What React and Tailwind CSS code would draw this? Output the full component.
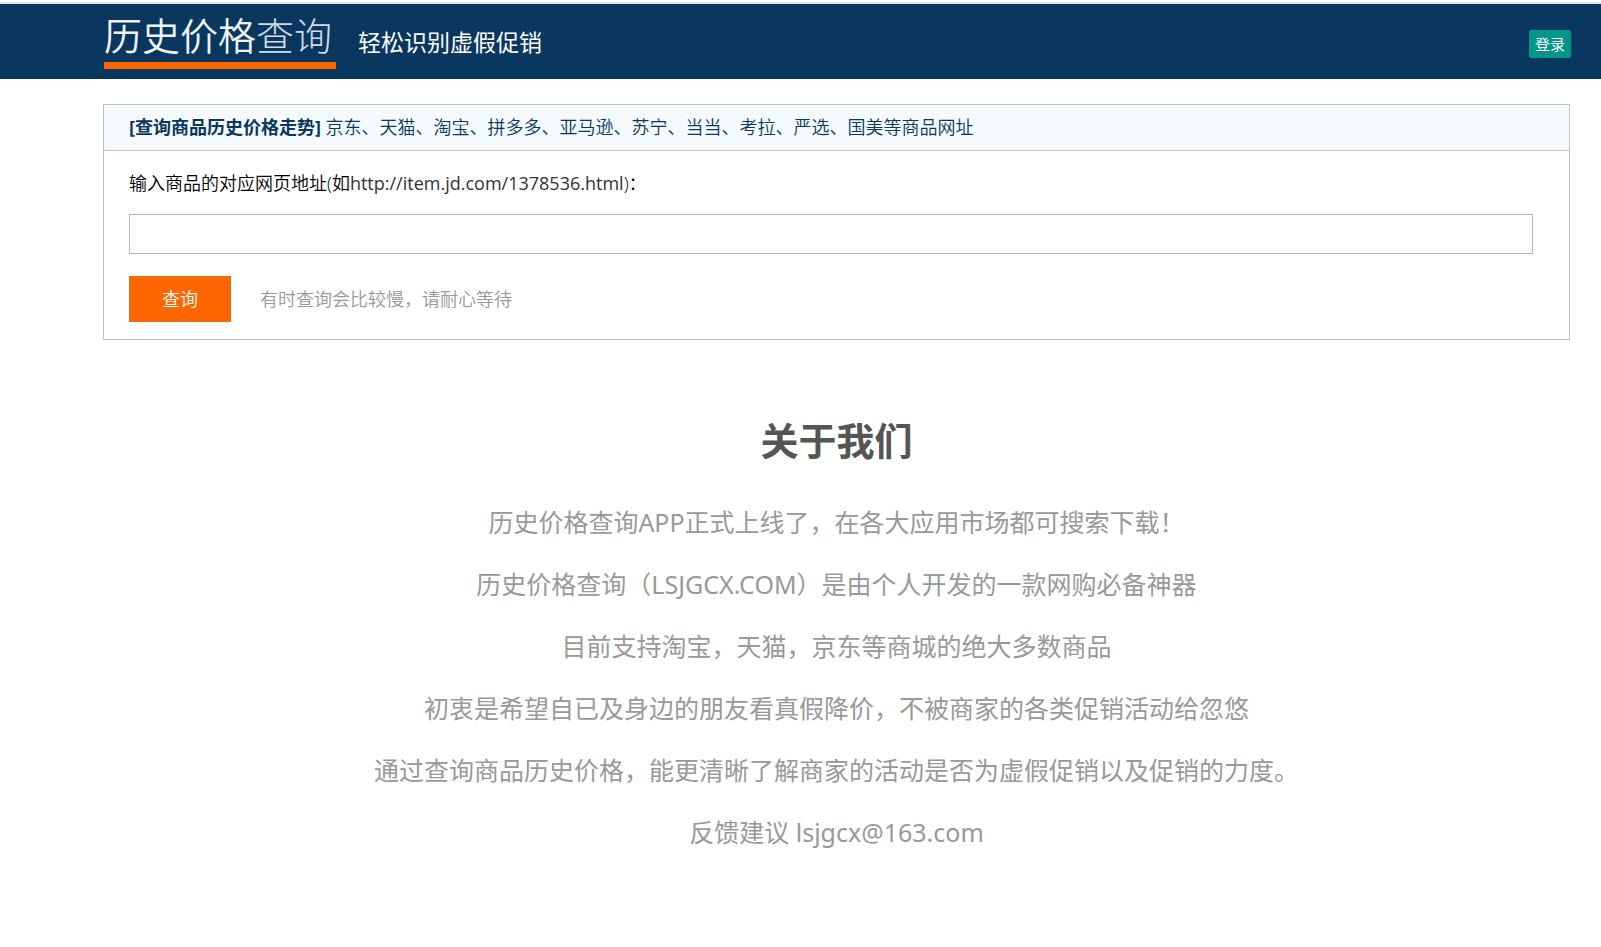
import React, { useState } from 'react';

const ABOUT_LINES = [
  '历史价格查询APP正式上线了，在各大应用市场都可搜索下载！',
  '历史价格查询（LSJGCX.COM）是由个人开发的一款网购必备神器',
  '目前支持淘宝，天猫，京东等商城的绝大多数商品',
  '初衷是希望自已及身边的朋友看真假降价，不被商家的各类促销活动给忽悠',
  '通过查询商品历史价格，能更清晰了解商家的活动是否为虚假促销以及促销的力度。',
  '反馈建议 lsjgcx@163.com',
];

const Header = () => (
  <header className="border-t-2 border-[#e6e6e6] bg-[#0a3760]">
    <div className="flex h-[75px] items-center justify-between pl-[104px] pr-[30px]">
      <div className="flex items-start">
        <a
          href="#"
          className="block border-b-[7px] border-[#ff6600] pb-1.5 pr-1 text-[38px] font-[350] leading-[42px] text-[#f1f4f7]"
        >
          历史价格<span className="font-light text-[#d3dbe3]">查询</span>
        </a>
        <p className="ml-[22px] mt-3 text-[23px] leading-8 text-white">轻松识别虚假促销</p>
      </div>
      <button
        type="button"
        className="mt-1 h-7 rounded-xs bg-[#009688] px-1.5 text-[15px] leading-7 text-white"
      >
        登录
      </button>
    </div>
  </header>
);

const SearchCard = () => {
  const [url, setUrl] = useState('');

  const handleSubmit = (e) => {
    e.preventDefault();
  };

  return (
    <section className="border border-[#c2c2c2] font-[350]">
      <h2 className="border-b border-[#c2c2c2] bg-[#f5fafe] pl-[25px] text-lg font-[350] leading-[45px] text-[#0a3760]">
        <b>[查询商品历史价格走势]</b> 京东、天猫、淘宝、拼多多、亚马逊、苏宁、当当、考拉、严选、国美等商品网址
      </h2>
      <form onSubmit={handleSubmit} className="pb-[17px] pl-[25px] pr-9 pt-4">
        <label htmlFor="url" className="block text-lg leading-8 text-black">
          输入商品的对应网页地址(如
          <span className="font-normal text-[#333333]">http://item.jd.com/1378536.html</span>)：
        </label>
        <input
          id="url"
          type="text"
          value={url}
          onChange={(e) => setUrl(e.target.value)}
          className="mt-[15px] block h-10 w-full border border-[#b5b5b5] px-2 text-lg outline-none"
        />
        <div className="mt-[22px] flex items-center">
          <button
            type="submit"
            className="h-[46px] w-[102px] border border-[#e0701c] bg-[#ff6600] text-lg text-white"
          >
            查询
          </button>
          <span className="ml-[29px] text-lg text-[#999999]">有时查询会比较慢，请耐心等待</span>
        </div>
      </form>
    </section>
  );
};

const About = () => (
  <section className="mt-[72px] text-center">
    <h1 className="text-[38px] font-bold leading-[56px] text-[#555555]">关于我们</h1>
    <div className="mt-[23px] font-['Noto_Sans','Noto_Sans_CJK_SC',sans-serif] text-[25px] leading-[62px] text-[#999999]">
      {ABOUT_LINES.map((line) => (
        <p key={line}>{line}</p>
      ))}
    </div>
  </section>
);

const App = () => (
  <div className="min-h-screen bg-white font-['Open_Sans','Noto_Sans_CJK_SC',sans-serif]">
    <div className="h-0.5" />
    <Header />
    <main className="pb-16 pl-[103px] pr-[31px] pt-[25px]">
      <SearchCard />
      <About />
    </main>
  </div>
);

export default App;
